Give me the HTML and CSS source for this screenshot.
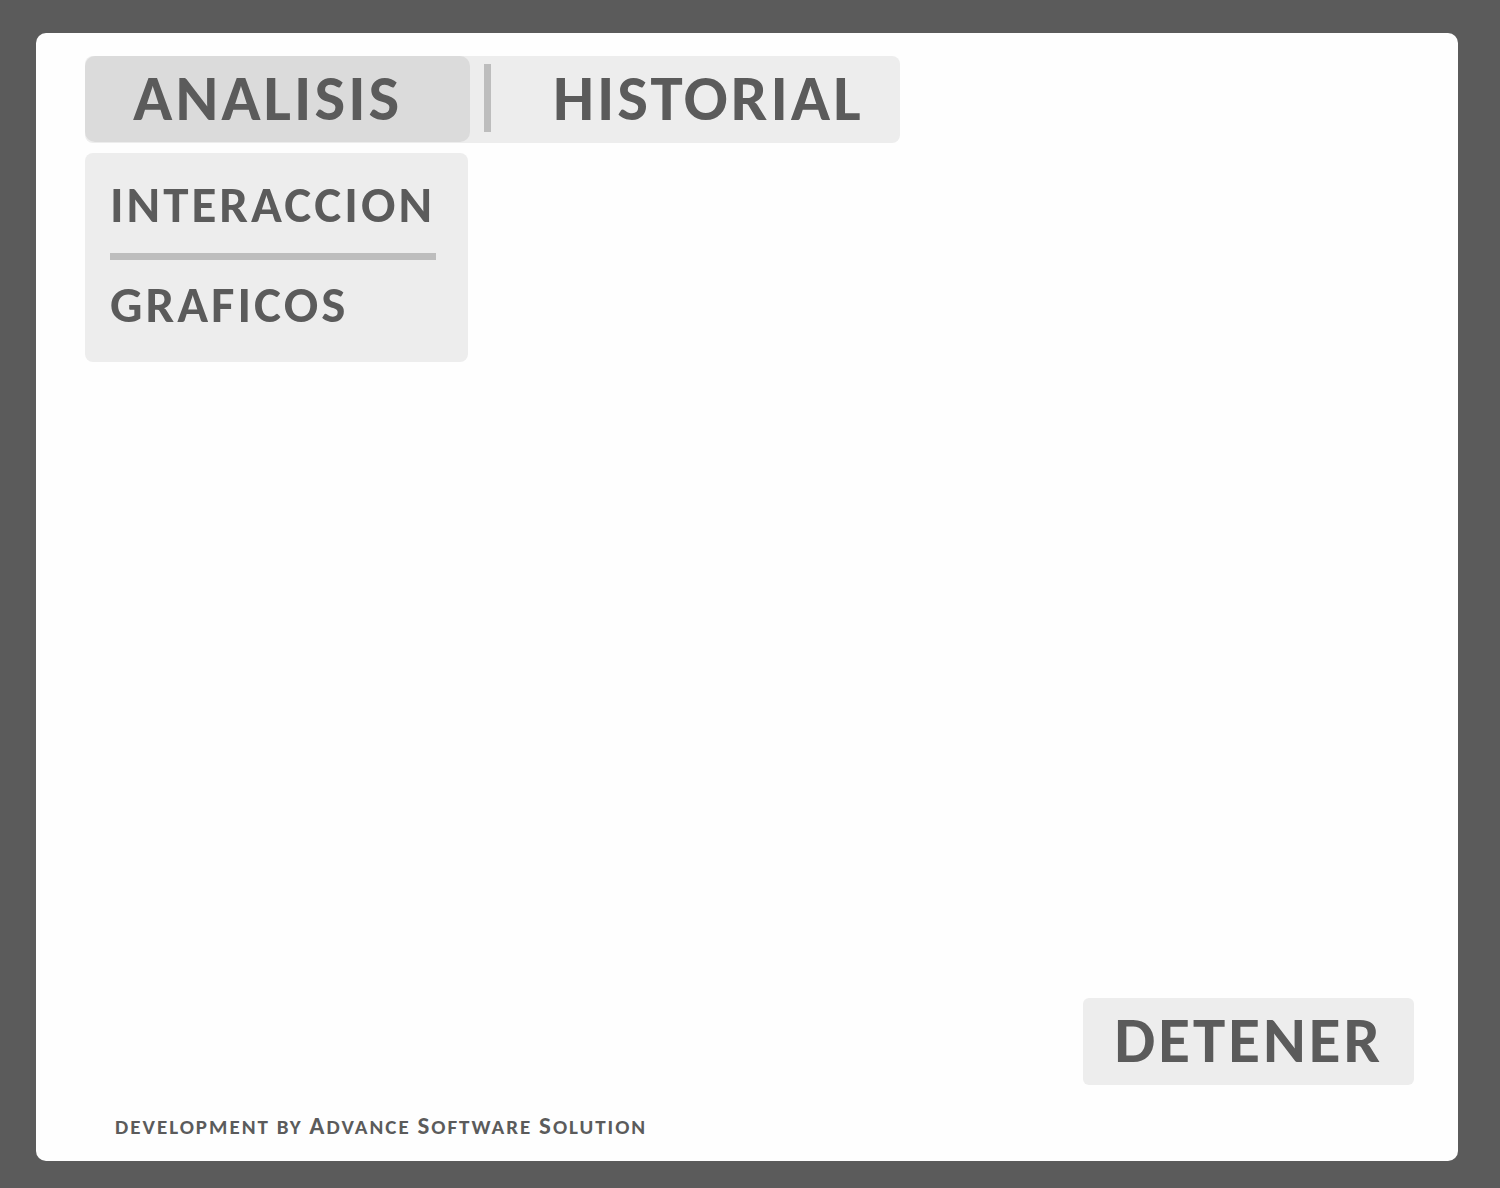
FILE: index.html
```html
<!DOCTYPE html>
<html lang="es">
<head>
<meta charset="utf-8">
<meta name="viewport" content="width=device-width, initial-scale=1">
<title>Analisis</title>
<link rel="stylesheet" href="styles.css">
</head>
<body>
<div class="panel">
  <header>
    <nav class="tabs">
      <button class="tab active" type="button" aria-expanded="true">ANALISIS</button>
      <span class="tab-divider"></span>
      <button class="tab" type="button">HISTORIAL</button>
    </nav>
    <nav class="submenu">
      <a href="#interaccion">INTERACCION</a>
      <hr>
      <a href="#graficos">GRAFICOS</a>
    </nav>
  </header>
  <main class="workspace">
    <button class="stop" type="button">DETENER</button>
  </main>
  <footer class="credit"><span class="word">DEVELOPMENT</span> <span class="word">BY</span> <span class="word cap">ADVANCE</span> <span class="word cap">SOFTWARE</span> <span class="word cap">SOLUTION</span></footer>
</div>
</body>
</html>
```
FILE: styles.css
```css
* { box-sizing: border-box; }

body {
  margin: 0;
  min-height: 100vh;
  display: flex;
  padding: 33px 42px 27px 36px;
  background: #5b5b5b;
  color: #5b5b5b;
  font-family: Carlito, Lato, sans-serif;
  font-weight: 700;
}

.panel {
  flex: 1;
  display: flex;
  flex-direction: column;
  padding: 23px 44px 16px 49px;
  border-radius: 10px;
  background: #fefefe;
}

button {
  border: 0;
  color: inherit;
  font-family: inherit;
  font-size: 65px;
  font-weight: inherit;
  line-height: 84px;
  letter-spacing: 3px;
  cursor: pointer;
}

.tabs {
  display: flex;
  align-items: flex-start;
  width: fit-content;
  border-radius: 8px;
  background: #ededed;
}

.tab {
  padding: 0 36px 3px 62px;
  background: none;
  text-align: left;
}

.tab.active {
  width: 385px;
  padding: 0 48px 2px;
  border-radius: 10px;
  background: #dbdbdb;
}

.tab-divider {
  width: 7px;
  height: 68px;
  margin: 8px 0 0 14px;
  background: #bdbdbd;
}

.submenu {
  width: 383px;
  margin-top: 10px;
  padding: 23px 25px 28px;
  border-radius: 8px;
  background: #ededed;
}

.submenu a {
  display: block;
  color: inherit;
  font-size: 51px;
  line-height: 58px;
  letter-spacing: 3px;
  text-decoration: none;
}

.submenu hr {
  width: 326px;
  height: 7px;
  margin: 19px 0 16px;
  border: 0;
  background: #bdbdbd;
}

.workspace {
  flex: 1;
  display: flex;
  justify-content: flex-end;
  align-items: flex-end;
}

.stop {
  padding: 0 31px 3px;
  border-radius: 6px;
  background: #ededed;
}

.credit {
  margin: 23px 0 0 30px;
  font-size: 21px;
  line-height: 36px;
  letter-spacing: 2px;
}

.word { display: inline-block; }

.cap::first-letter { font-size: 25px; }
```
